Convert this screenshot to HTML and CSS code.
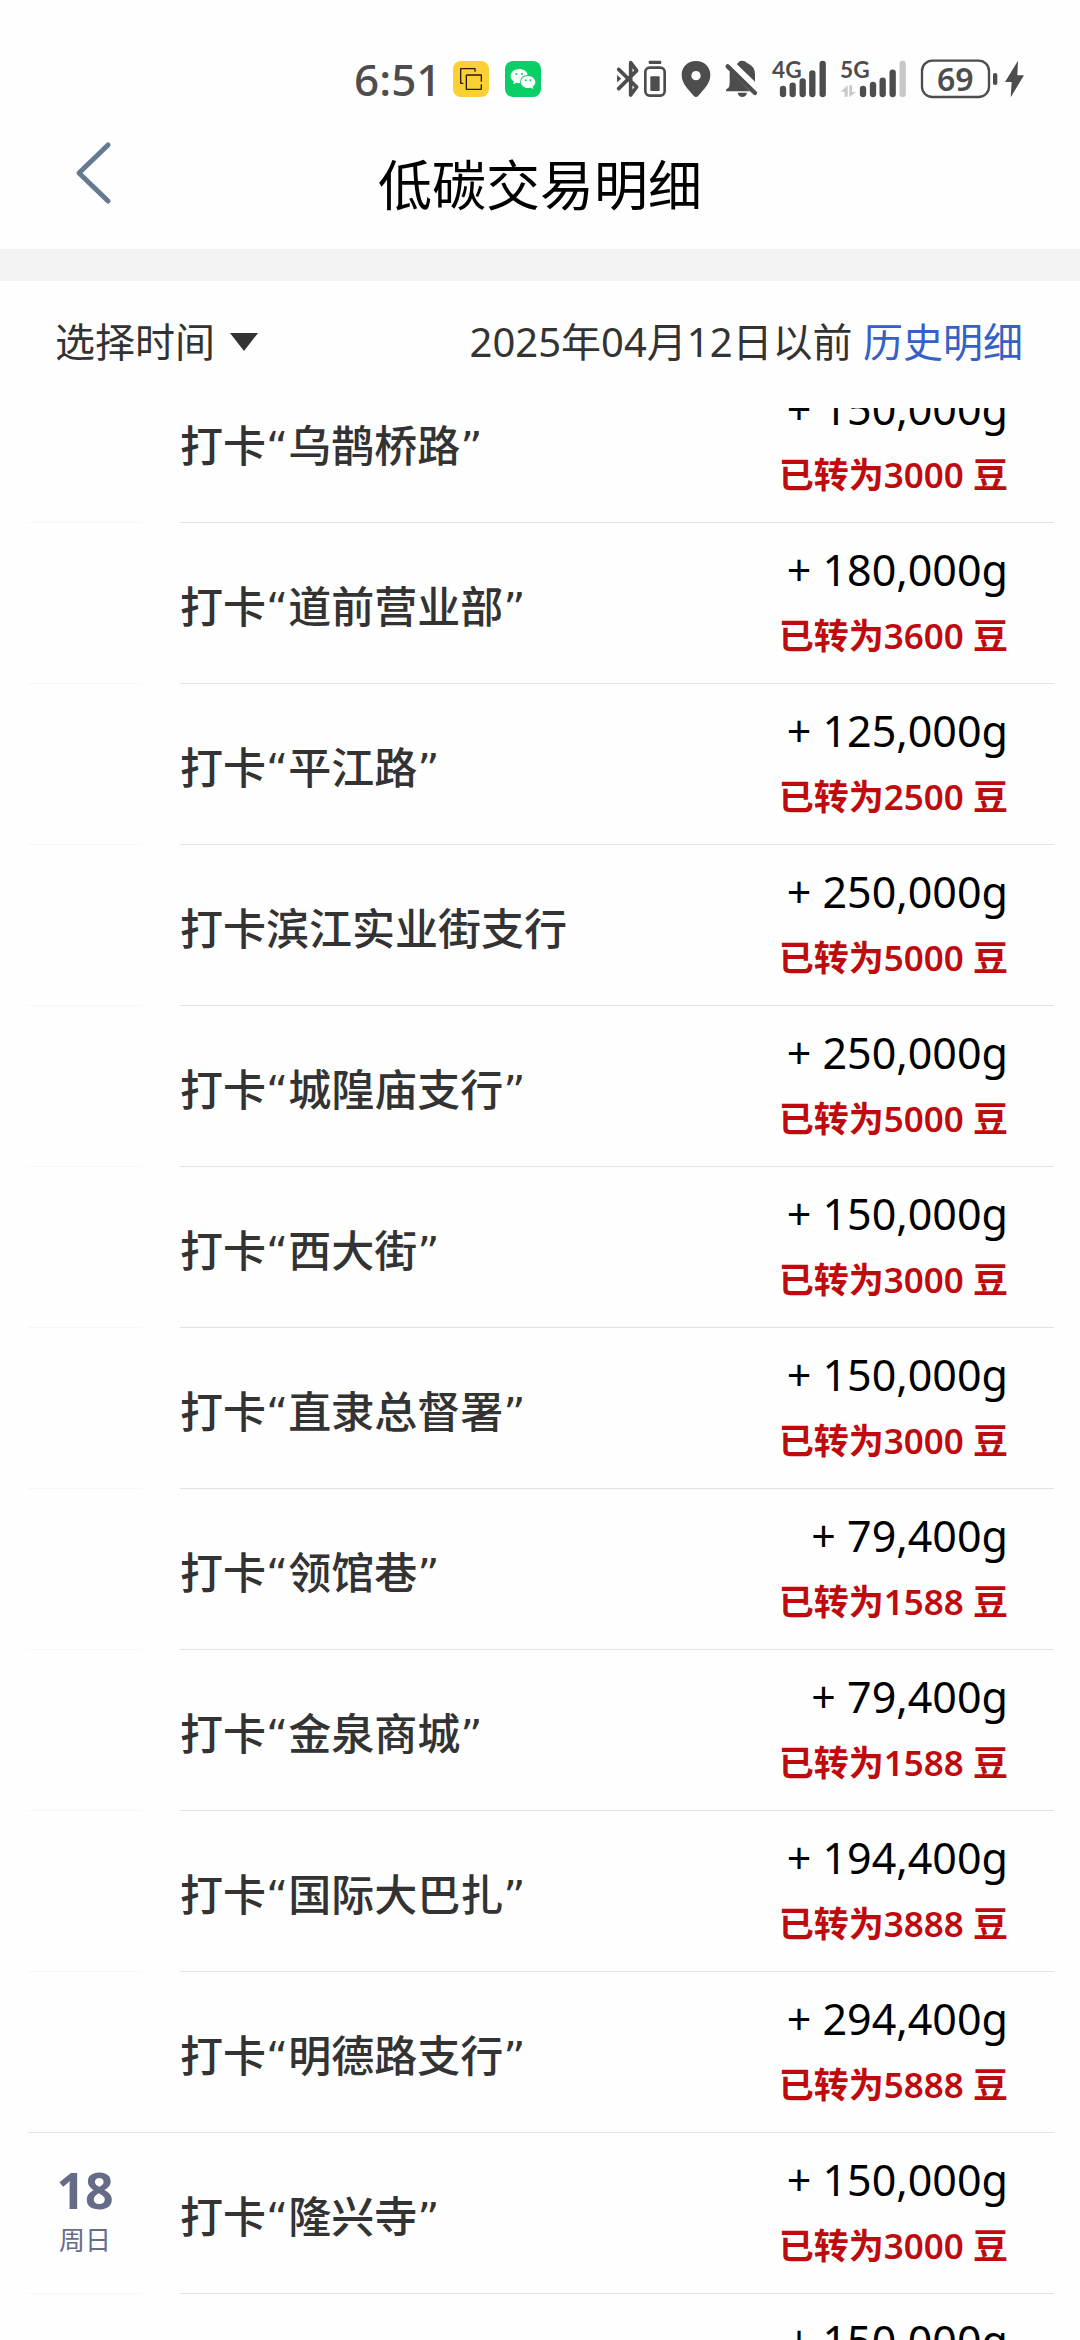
FILE: index.html
```html
<!DOCTYPE html>
<html lang="zh-CN">
<head>
    <meta charset="UTF-8">
    <meta name="viewport" content="width=device-width, initial-scale=1.0">
    <title>低碳交易明细</title>
    <link rel="stylesheet" href="styles.css">
</head>
<body>
    <div class="status-bar">
        <span class="time">6:51</span>
        <div class="apps">
            <svg width="36" height="36" viewBox="0 0 108 108">
                <rect width="108" height="108" rx="24" fill="#fbd034"/>
                <path d="M31 67h-8V23h43v9M40 42h45v20M85 70v15H40V42" fill="none" stroke="#2b1a10" stroke-width="4" stroke-linejoin="round"/>
            </svg>
            <svg width="36" height="36" viewBox="0 0 108 108">
                <rect width="108" height="108" rx="24" fill="#09d066"/>
                <path d="M43 24c-15 0-26 9-26 21 0 7 4 13 10 16l-3 9 10-5c4 1 7 2 12 1-2-14 8-24 22-24-2-11-12-18-25-18z" fill="#fff"/>
                <path d="M69 45c-12 0-21 8-21 18s9 18 21 18c3 0 6 0 8-1l8 4-2-7c5-4 8-8 8-14 0-10-10-18-22-18z" fill="#fff"/>
                <g fill="#09d066">
                    <circle cx="34" cy="39" r="3"/><circle cx="51" cy="39" r="3"/>
                    <circle cx="62" cy="58" r="3"/><circle cx="76" cy="58" r="3"/>
                </g>
            </svg>
        </div>
        <div class="indicators">
            <div class="pair">
                <!-- bluetooth -->
                <svg width="26" height="40" viewBox="50 57 78 120">
                    <path d="M58 88l54 53-18 24V68l18 24-54 54" fill="none" stroke="#4d4d4d" stroke-width="11" stroke-linecap="round" stroke-linejoin="round"/>
                    <path d="M53 105v22l13-11z" fill="#4d4d4d"/>
                </svg>
                <svg width="26" height="40" viewBox="128 57 78 120">
                    <rect x="148" y="62" width="38" height="10" rx="4" fill="#4d4d4d"/>
                    <rect x="138" y="83" width="58" height="84" rx="13" fill="none" stroke="#4d4d4d" stroke-width="8"/>
                    <rect x="153" y="109" width="28" height="44" rx="3" fill="#4d4d4d"/>
                </svg>
            </div>
            <svg width="32" height="40" viewBox="240 57 96 120">
                <path d="M288 63c-25 0-43 18-43 42 0 26 20 44 36 62q7 8 14 0c16-18 36-36 36-62 0-24-18-42-43-42zm0 30a14 14 0 1 1 0 28 14 14 0 0 1 0-28z" fill="#4d4d4d" fill-rule="evenodd"/>
            </svg>
            <!-- muted bell -->
            <svg width="35" height="40" viewBox="372 57 105 120">
                <path d="M390 93l60 61h-71q-4-6 6-10 4-3 4-14V98q0-3 1-5zM410 72q6-3 8-8 8-4 17 0 3 4 8 6 22 10 22 33v22zM413 158h28q-3 13-14 13t-14-13z" fill="#4d4d4d"/>
                <path d="M383 79l82 80" stroke="#4d4d4d" stroke-width="13" stroke-linecap="round"/>
            </svg>
            <svg class="signal" width="56" height="40" viewBox="513 57 168 120">
                <text x="516" y="114">4G</text>
                <path d="M549 147v15M578 137v25M608 124v38M637 100v62M668 72v90"/>
            </svg>
            <svg class="signal" width="68" height="40" viewBox="57 57 204 120">
                <text x="60" y="114">5G</text>
                <path d="M129 147v15M159 135v27M188 122v40M218 98v64"/>
                <path class="off" d="M248 72v90"/>
                <path class="arrows" d="M83 170h-9v-15H62l21-19zM88 136h8v20h12l-20 16z"/>
            </svg>
            <div class="pair">
                <svg class="level" width="80" height="40" viewBox="297 57 240 120">
                    <rect x="306" y="62" width="201" height="109" rx="31" fill="none" stroke="#4d4d4d" stroke-width="7"/>
                    <rect x="519" y="99" width="13" height="36" rx="6" fill="#4d4d4d"/>
                    <text x="406" y="152" text-anchor="middle">69</text>
                </svg>
                <svg width="27" height="40" viewBox="537 57 81 120">
                    <path d="M594 62l-39 64h20l-3 46 40-66h-20z" fill="#4d4d4d"/>
                </svg>
            </div>
        </div>
    </div>

    <header class="title-bar">
        <button class="back" type="button" aria-label="返回">
            <svg width="40" height="66" viewBox="0 0 40 66" fill="none" stroke="#647a90" stroke-width="5" stroke-linecap="round" stroke-linejoin="round">
                <path d="M36 5L7 33l29 28"/>
            </svg>
        </button>
        <h1>低碳交易明细</h1>
    </header>

    <div class="filter">
        <button class="pick" type="button">选择时间
            <svg width="28" height="18" viewBox="0 0 28 18"><path d="M0 0h28L14 18z" fill="#333"/></svg>
        </button>
        <p>2025年04月12日以前 <a href="#history">历史明细</a></p>
    </div>

    <main class="scroller">
        <ul class="records" id="records"></ul>
    </main>

    <script>
        const records = [
            { name: "打卡“乌鹊桥路”", amount: "150,000", beans: 3000 },
            { name: "打卡“道前营业部”", amount: "180,000", beans: 3600 },
            { name: "打卡“平江路”", amount: "125,000", beans: 2500 },
            { name: "打卡滨江实业街支行", amount: "250,000", beans: 5000 },
            { name: "打卡“城隍庙支行”", amount: "250,000", beans: 5000 },
            { name: "打卡“西大街”", amount: "150,000", beans: 3000 },
            { name: "打卡“直隶总督署”", amount: "150,000", beans: 3000 },
            { name: "打卡“领馆巷”", amount: "79,400", beans: 1588 },
            { name: "打卡“金泉商城”", amount: "79,400", beans: 1588 },
            { name: "打卡“国际大巴扎”", amount: "194,400", beans: 3888 },
            { name: "打卡“明德路支行”", amount: "294,400", beans: 5888, last: true },
            { name: "打卡“隆兴寺”", amount: "150,000", beans: 3000, day: "18", week: "周日" },
            { name: "", amount: "150,000", beans: 3000 }
        ];

        const list = document.getElementById("records");
        records.forEach((r) => {
            const row = document.createElement("li");
            // last record of a day gets the full width line
            row.className = r.last ? "record day-end" : "record";
            row.innerHTML = `
                <div class="day">${r.day ? `<b>${r.day}</b><span>${r.week}</span>` : ""}</div>
                <div class="detail">
                    <span class="name">${r.name}</span>
                    <div class="value">
                        <span class="amount">+ ${r.amount}g</span>
                        <span class="beans">已转为${r.beans} 豆</span>
                    </div>
                </div>
            `;
            list.appendChild(row);
        });
    </script>
</body>
</html>
```
FILE: styles.css
```css
* { box-sizing: border-box; }
body {
    margin: 0;
    height: 100vh;
    display: flex;
    flex-direction: column;
    overflow: hidden;
    background-color: #fefefe;
    color: #333;
    font-family: "Noto Sans", "Noto Sans CJK SC", sans-serif;
    font-size: 40px;
}
h1, p, ul { margin: 0; padding: 0; }
button {
    padding: 0;
    border: 0;
    background: none;
    color: inherit;
    font: inherit;
}
svg { display: block; overflow: visible; }

/* status bar */
.status-bar {
    display: flex;
    align-items: center;
    flex: none;
    height: 120px;
    padding: 38px 54px 0 354px;
    color: #4d4d4d;
}
.time { font-size: 44px; font-weight: 500; line-height: 80px; }
.apps { display: flex; gap: 16px; margin-left: 12px; }
.indicators { display: flex; gap: 12px; margin-left: auto; }
.pair { display: flex; }
.signal text { font-family: Lato, "Noto Sans", sans-serif; font-size: 68px; font-weight: 700; fill: #4d4d4d; }
.signal path { fill: none; stroke: #4d4d4d; stroke-width: 19; stroke-linecap: round; }
.signal .off { stroke: #c8c8c8; }
.signal .arrows { fill: #c8c8c8; stroke: none; }
.level text { font-size: 96px; font-weight: 600; fill: #4d4d4d; }

/* title bar */
.title-bar {
    display: grid;
    grid-template-columns: 1fr auto 1fr;
    align-items: center;
    flex: none;
    height: 129px;
}
.back { align-self: start; justify-self: start; padding: 20px 72px; }
h1 { color: #000; font-size: 54px; font-weight: 400; line-height: 80px; }

.filter {
    display: flex;
    justify-content: space-between;
    align-items: center;
    flex: none;
    height: 159px;
    padding: 0 57px 6px 55px;
    border-top: 32px solid #f3f3f3;
    line-height: 60px;
}
.pick { display: flex; align-items: center; gap: 15px; }
.filter a { color: #3560c8; text-decoration: none; }

/* records */
.scroller { flex: 1; min-height: 0; overflow: hidden; }
.records { margin-top: -46px; list-style: none; }
.record {
    display: flex;
    justify-content: space-between;
    height: 161px;
    margin: 0 26px 0 28px;
}
.day {
    display: flex;
    flex-direction: column;
    align-items: center;
    width: 114px;
    padding-top: 24px;
    border-bottom: 1px solid #f7f7f7;
    color: #666c88;
}
.day b { font-size: 50px; line-height: 66px; }
.day span { font-size: 26px; line-height: 34px; }
.detail {
    display: flex;
    justify-content: space-between;
    align-items: center;
    flex: 1;
    margin-left: 38px;
    padding-right: 46px;
    border-bottom: 1px solid #e2e2e2;
}
.day-end { border-bottom: 1px solid #e2e2e2; }
.day-end .day, .day-end .detail { border-bottom-color: transparent; }
.name { padding-top: 10px; font-family: "DejaVu Sans", "Noto Sans CJK SC", sans-serif; font-size: 43px; font-weight: 500; line-height: 66px; }
.value { display: flex; flex-direction: column; align-items: flex-end; line-height: 66px; }
.amount { color: #000; font-size: 43px; }
.beans { color: #bf0a0e; font-size: 35px; font-weight: 600; }
```
